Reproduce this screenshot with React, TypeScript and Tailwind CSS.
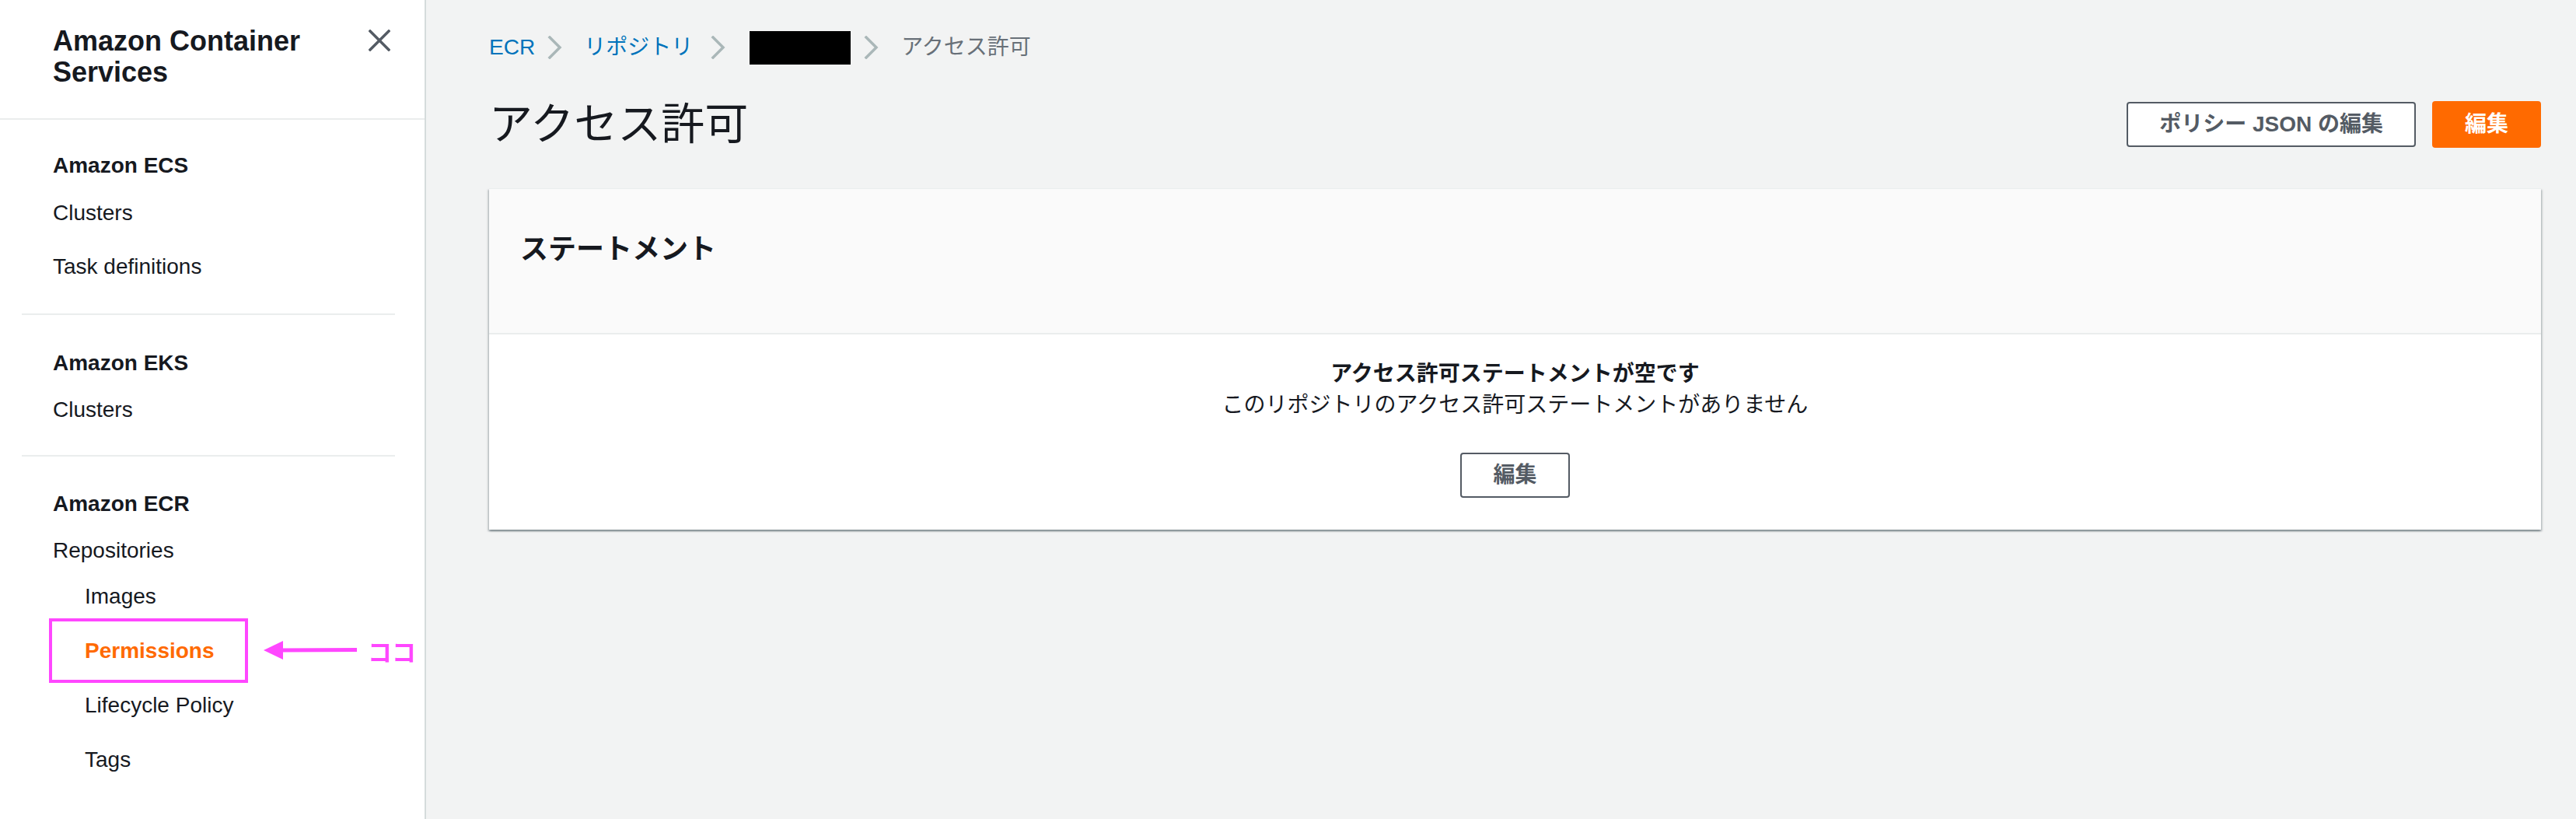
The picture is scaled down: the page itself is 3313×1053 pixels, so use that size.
import React from "react";

const FONT = "font-['Liberation_Sans','Noto_Sans_CJK_JP',sans-serif]";

function Chevron() {
  return (
    <svg width="20" height="30" viewBox="0 0 20 30" className="shrink-0">
      <path d="M3 2 L16 15 L3 28" fill="none" stroke="#aab7b8" strokeWidth="3.5" strokeLinecap="square" />
    </svg>
  );
}

function CloseIcon() {
  return (
    <svg width="28" height="28" viewBox="0 0 28 28" className="mt-[5px] shrink-0">
      <path d="M2 2 L26 26 M26 2 L2 26" stroke="#545b64" strokeWidth="3.5" strokeLinecap="square" />
    </svg>
  );
}

function Sidebar() {
  return (
    <aside className="w-[548px] shrink-0 bg-white border-r-2 border-[#d5dbdb] shadow-[1px_0_2px_rgba(0,28,36,0.15)] text-[#16191f]">
      <div className="flex justify-between pl-[68px] pr-[44px] pt-[33px] pb-[39px] border-b-2 border-[#eaeded]">
        <div className="w-[400px] text-[36px] leading-[40px] font-bold">Amazon Container Services</div>
        <CloseIcon />
      </div>
      <nav className="ml-[28px] w-[480px] text-[28px] leading-[40px]">
        <div className="pl-[40px] pt-[39px] pb-[40px] border-b-2 border-[#eaeded]">
          <div className="font-bold">Amazon ECS</div>
          <ul className="mt-[21px] flex flex-col gap-[29px]">
            <li>Clusters</li>
            <li>Task definitions</li>
          </ul>
        </div>
        <div className="pl-[40px] pt-[42px] pb-[38px] border-b-2 border-[#eaeded]">
          <div className="font-bold">Amazon EKS</div>
          <ul className="mt-[20px] flex flex-col gap-[30px]">
            <li>Clusters</li>
          </ul>
        </div>
        <div className="pl-[40px] pt-[41px] pb-[38px]">
          <div className="font-bold">Amazon ECR</div>
          <ul className="mt-[20px] flex flex-col gap-[30px]">
            <li>
              Repositories
              <ul className="mt-[19px] pl-[41px] flex flex-col gap-[30px]">
                <li>Images</li>
                <li className="relative font-bold text-[#ff6a00]">
                  Permissions
                  <div className="absolute left-[-46px] top-[-22px] w-[256px] h-[83px] border-[4px] border-[#ff47ff]" />
                  <svg width="122" height="28" viewBox="0 0 122 28" className="absolute left-[230px] top-[5px]">
                    <path d="M22 14 L120 13.5" stroke="#ff47ff" strokeWidth="5" />
                    <path d="M0 14 L25 2 L25 26 Z" fill="#ff47ff" />
                  </svg>
                  <span className="absolute left-[364px] top-0 whitespace-nowrap text-[31px] leading-[40px] font-bold text-[#ff47ff] font-['Noto_Sans_CJK_JP',sans-serif]">
                    ココ
                  </span>
                </li>
                <li>Lifecycle Policy</li>
                <li>Tags</li>
              </ul>
            </li>
          </ul>
        </div>
      </nav>
    </aside>
  );
}

function Main() {
  return (
    <main className="flex-1 bg-[#f2f3f3] pl-[81px] pr-[45px] pt-[40px] text-[#16191f]">
      <div className="h-[42px] flex items-center text-[28px] leading-[42px] whitespace-nowrap">
        <span className="text-[#0073bb]">ECR</span>
        <span className="ml-[16px]"><Chevron /></span>
        <span className="ml-[27px] text-[#0073bb]">リポジトリ</span>
        <span className="ml-[23px]"><Chevron /></span>
        <span className="ml-[30px] w-[130px] h-[43px] bg-black" />
        <span className="ml-[17px]"><Chevron /></span>
        <span className="ml-[28px] text-[#687078]">アクセス許可</span>
      </div>
      <div className="mt-[46px] h-[64px] flex items-center justify-between">
        <h1 className="text-[56px] leading-[64px] font-normal">アクセス許可</h1>
        <div className="flex items-center gap-[21px]">
          <button className="h-[58px] px-[40px] border-2 border-[#545b64] rounded-[4px] bg-white text-[28px] leading-[40px] font-bold text-[#545b64]">
            ポリシー JSON の編集
          </button>
          <button className="h-[60px] px-[42px] rounded-[4px] bg-[#ff6a00] text-[28px] leading-[40px] font-bold text-white">
            編集
          </button>
        </div>
      </div>
      <section className="mt-[50px] bg-white border-t border-[#eaeded] shadow-[0_2px_2px_0_rgba(0,28,36,0.3),2px_2px_2px_0_rgba(0,28,36,0.15),-2px_2px_2px_0_rgba(0,28,36,0.15)]">
        <div className="h-[187px] bg-[#fafafa] border-b-2 border-[#eaeded] pl-[40px] pt-[56px]">
          <h2 className="text-[36px] leading-[44px] font-bold">ステートメント</h2>
        </div>
        <div className="pt-[31px] pb-[41px] flex flex-col items-center">
          <div className="text-[28px] leading-[40px] font-bold">アクセス許可ステートメントが空です</div>
          <div className="text-[28px] leading-[40px]">このリポジトリのアクセス許可ステートメントがありません</div>
          <button className="mt-[41px] h-[58px] px-[40px] border-2 border-[#545b64] rounded-[4px] bg-white text-[28px] leading-[40px] font-bold text-[#545b64]">
            編集
          </button>
        </div>
      </section>
    </main>
  );
}

export default function App() {
  return (
    <div className={`${FONT} flex min-h-[1053px] w-full`}>
      <Sidebar />
      <Main />
    </div>
  );
}
